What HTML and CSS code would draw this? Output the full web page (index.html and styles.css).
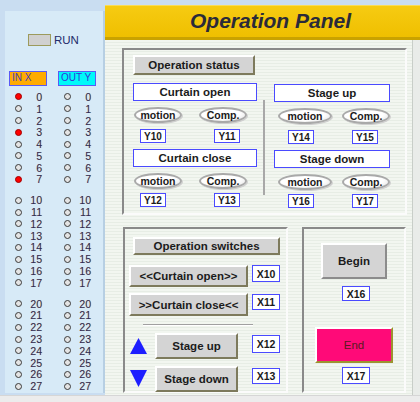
FILE: index.html
```html
<!DOCTYPE html>
<html lang="en">
<head>
    <meta charset="UTF-8">
    <title>Operation Panel</title>
    <link rel="stylesheet" href="styles.css">
</head>
<body>
    <div class="screen">
        <!-- Panel de entradas / salidas -->
        <aside class="io-panel">
            <div class="run"><span class="run-lamp"></span>RUN</div>
            <div class="io-cols">
                <div class="io-col">
                    <div class="io-tag in">IN X</div>
                    <ul class="io-group first">
                        <li><span class="led on"></span><span class="num">0</span></li>
                        <li><span class="led"></span><span class="num">1</span></li>
                        <li><span class="led"></span><span class="num">2</span></li>
                        <li><span class="led on"></span><span class="num">3</span></li>
                        <li><span class="led"></span><span class="num">4</span></li>
                        <li><span class="led"></span><span class="num">5</span></li>
                        <li><span class="led"></span><span class="num">6</span></li>
                        <li><span class="led on"></span><span class="num">7</span></li>
                    </ul>
                    <ul class="io-group">
                        <li><span class="led"></span><span class="num">10</span></li>
                        <li><span class="led"></span><span class="num">11</span></li>
                        <li><span class="led"></span><span class="num">12</span></li>
                        <li><span class="led"></span><span class="num">13</span></li>
                        <li><span class="led"></span><span class="num">14</span></li>
                        <li><span class="led"></span><span class="num">15</span></li>
                        <li><span class="led"></span><span class="num">16</span></li>
                        <li><span class="led"></span><span class="num">17</span></li>
                    </ul>
                    <ul class="io-group">
                        <li><span class="led"></span><span class="num">20</span></li>
                        <li><span class="led"></span><span class="num">21</span></li>
                        <li><span class="led"></span><span class="num">22</span></li>
                        <li><span class="led"></span><span class="num">23</span></li>
                        <li><span class="led"></span><span class="num">24</span></li>
                        <li><span class="led"></span><span class="num">25</span></li>
                        <li><span class="led"></span><span class="num">26</span></li>
                        <li><span class="led"></span><span class="num">27</span></li>
                    </ul>
                </div>
                <div class="io-col">
                    <div class="io-tag out">OUT Y</div>
                    <ul class="io-group first">
                        <li><span class="led"></span><span class="num">0</span></li>
                        <li><span class="led"></span><span class="num">1</span></li>
                        <li><span class="led"></span><span class="num">2</span></li>
                        <li><span class="led"></span><span class="num">3</span></li>
                        <li><span class="led"></span><span class="num">4</span></li>
                        <li><span class="led"></span><span class="num">5</span></li>
                        <li><span class="led"></span><span class="num">6</span></li>
                        <li><span class="led"></span><span class="num">7</span></li>
                    </ul>
                    <ul class="io-group">
                        <li><span class="led"></span><span class="num">10</span></li>
                        <li><span class="led"></span><span class="num">11</span></li>
                        <li><span class="led"></span><span class="num">12</span></li>
                        <li><span class="led"></span><span class="num">13</span></li>
                        <li><span class="led"></span><span class="num">14</span></li>
                        <li><span class="led"></span><span class="num">15</span></li>
                        <li><span class="led"></span><span class="num">16</span></li>
                        <li><span class="led"></span><span class="num">17</span></li>
                    </ul>
                    <ul class="io-group">
                        <li><span class="led"></span><span class="num">20</span></li>
                        <li><span class="led"></span><span class="num">21</span></li>
                        <li><span class="led"></span><span class="num">22</span></li>
                        <li><span class="led"></span><span class="num">23</span></li>
                        <li><span class="led"></span><span class="num">24</span></li>
                        <li><span class="led"></span><span class="num">25</span></li>
                        <li><span class="led"></span><span class="num">26</span></li>
                        <li><span class="led"></span><span class="num">27</span></li>
                    </ul>
                </div>
            </div>
        </aside>

        <!-- Panel de operación -->
        <main class="panel">
            <header class="panel-head"><h1>Operation Panel</h1></header>
            <div class="panel-body">
                <section class="frame status">
                    <div class="raised status-title">Operation status</div>
                    <div class="status-grid">
                        <div class="device-group left">
                            <div class="device-title">Curtain open</div>
                            <div class="lamps"><span class="lamp">motion</span><span class="lamp">Comp.</span></div>
                            <div class="tags"><span class="tag">Y10</span><span class="tag">Y11</span></div>
                            <div class="device-title">Curtain close</div>
                            <div class="lamps"><span class="lamp">motion</span><span class="lamp">Comp.</span></div>
                            <div class="tags last"><span class="tag">Y12</span><span class="tag">Y13</span></div>
                        </div>
                        <div class="vsep"></div>
                        <div class="device-group right">
                            <div class="device-title">Stage up</div>
                            <div class="lamps"><span class="lamp wide">motion</span><span class="lamp">Comp.</span></div>
                            <div class="tags"><span class="tag">Y14</span><span class="tag">Y15</span></div>
                            <div class="device-title">Stage down</div>
                            <div class="lamps"><span class="lamp wide">motion</span><span class="lamp">Comp.</span></div>
                            <div class="tags last"><span class="tag">Y16</span><span class="tag">Y17</span></div>
                        </div>
                    </div>
                </section>

                <div class="bottom-row">
                    <section class="frame switches">
                        <div class="raised switches-title">Operation switches</div>
                        <div class="sw-row first">
                            <button class="raised sw-btn">&lt;&lt;Curtain open&gt;&gt;</button>
                            <span class="tag x-tag">X10</span>
                        </div>
                        <div class="sw-row">
                            <button class="raised sw-btn tall">&gt;&gt;Curtain close&lt;&lt;</button>
                            <span class="tag x-tag">X11</span>
                        </div>
                        <div class="hsep"></div>
                        <div class="sw-row stage">
                            <svg class="arrow" width="17" height="16" viewBox="0 0 17 16"><polygon points="8.5,0 17,16 0,16" fill="#1e1eff"/></svg>
                            <button class="raised stage-btn">Stage up</button>
                            <span class="tag x-tag">X12</span>
                        </div>
                        <div class="sw-row stage">
                            <svg class="arrow down" width="17" height="17" viewBox="0 0 17 17"><polygon points="0,0 17,0 8.5,17" fill="#1e1eff"/></svg>
                            <button class="raised stage-btn">Stage down</button>
                            <span class="tag x-tag short">X13</span>
                        </div>
                    </section>

                    <section class="frame start">
                        <button class="raised big-btn begin">Begin</button>
                        <span class="tag x-tag x16">X16</span>
                        <button class="raised big-btn end">End</button>
                        <span class="tag x-tag x17">X17</span>
                    </section>
                </div>
            </div>
        </main>
    </div>
    <div class="taskbar"></div>
</body>
</html>
```

FILE: styles.css
```css
:root {
    --gray-btn: #d4d4d4;
    --blue-line: #4a4aff;
    --frame-dark: #8a8a8a;
    --text-dark: #1b1b1b;
}

* {
    margin: 0;
    padding: 0;
    box-sizing: border-box;
}

html, body {
    width: 420px;
    height: 402px;
    overflow: hidden;
}

body {
    background-color: #c9ddf1;
    font-family: 'Liberation Sans', Arial, sans-serif;
    color: var(--text-dark);
}

.screen {
    display: grid;
    grid-template-columns: 100px 315px;
    padding-left: 5px;
    height: 395px;
}

/* Panel izquierdo de E/S */
.io-panel {
    margin-top: 11px;
    height: 382px;
    background-color: #d7eaf7;
    border-right: 2px solid #b7cfe3;
    padding: 23px 0 0 4px;
}

.run {
    display: flex;
    align-items: center;
    gap: 3px;
    margin-left: 19px;
    height: 12px;
    font-size: 11.5px;
    color: #242c6a;
}

.run-lamp {
    width: 23px;
    height: 12px;
    background-color: #d0d0d0;
    border: 1.5px solid #9c9a5c;
}

.io-cols {
    display: flex;
    gap: 11px;
    margin-top: 25px;
}

.io-col {
    width: 38px;
}

.io-tag {
    height: 15px;
    border: 1.5px solid #5a5af5;
    font-size: 10px;
    line-height: 12px;
    padding-left: 2px;
}

.io-tag.in {
    background-color: #ffab00;
    color: #4b3fb2;
}

.io-tag.out {
    background-color: #00f8f8;
    color: #3434d8;
}

.io-group {
    list-style: none;
    margin-top: 9px;
}

.io-group.first {
    margin-top: 5px;
}

.io-group li {
    display: flex;
    align-items: center;
    height: 11.8px;
    font-size: 10.5px;
    color: #2c2c5c;
    padding-right: 5px;
}

.led {
    width: 7px;
    height: 7px;
    border-radius: 50%;
    border: 1.5px solid #3a3a3a;
    background-color: #e4e4e4;
    margin-left: 6px;
}

.led.on {
    background-color: #ff0000;
    border-color: #a00000;
}

.num {
    margin-left: auto;
    text-shadow: 0.5px 0 0 rgba(225, 150, 20, 0.55);
}

/* Panel de operación */
.panel {
    margin-top: 5px;
    display: flex;
    flex-direction: column;
}

.panel-head {
    height: 35px;
    background: linear-gradient(#f6cb12, #efbf00);
    border-top: 1px solid #f9dc58;
    border-bottom: 3px solid #c9a200;
    text-align: center;
    padding: 4px 0 0 16px;
}

.panel-head h1 {
    font-size: 21px;
    line-height: 21px;
    font-style: italic;
    font-weight: bold;
    color: #2a2a3a;
}

.panel-body {
    flex: 1;
    background: repeating-linear-gradient(180deg, #f2f6f0 0 2px, #e7ede5 2px 3px);
    box-shadow: inset -7px 0 0 #e9ece9, inset -8px 0 0 #c8cec8;
    padding: 8px 0 0 17px;
}

.frame {
    border: 2px solid;
    border-color: var(--frame-dark) #fbfbfb #fbfbfb var(--frame-dark);
}

.raised {
    display: flex;
    align-items: center;
    justify-content: center;
    background-color: var(--gray-btn);
    border: 2px solid;
    border-color: #ffffff #7d7a5c #7d7a5c #ffffff;
    font-family: inherit;
    font-weight: bold;
    font-size: 11.5px;
    color: var(--text-dark);
}

.status {
    width: 285px;
    height: 167px;
    padding: 5px 0 0 9px;
}

.status-title {
    width: 122px;
    height: 20px;
}

.status-grid {
    display: grid;
    grid-template-columns: 124px 17px 116px;
    margin-top: 8px;
}

.vsep {
    width: 2px;
    height: 95px;
    margin: 17px 0 0 6px;
    background-color: #a8a8a8;
}

.device-group.right {
    margin-top: 1px;
}

.device-title {
    height: 18px;
    background-color: #ffffff;
    border: 1.5px solid var(--blue-line);
    display: flex;
    align-items: center;
    justify-content: center;
    font-weight: bold;
    font-size: 11.5px;
}

.lamps {
    display: flex;
    justify-content: space-between;
    margin: 6px 0;
}

.left .lamps {
    padding: 0 10px 0 1px;
}

.right .lamps {
    padding-left: 4px;
}

.lamp {
    width: 48px;
    height: 16px;
    border-radius: 50%;
    border: 2px solid #a9a9a9;
    background: radial-gradient(ellipse at 45% 40%, #ffffff 55%, #d8d8d8 100%);
    box-shadow: 1px 1px 0 #cfcfcf;
    display: flex;
    align-items: center;
    justify-content: center;
    font-weight: bold;
    font-size: 10.5px;
}

.lamp.wide {
    width: 54px;
}

.tags {
    display: flex;
    justify-content: space-between;
    margin-bottom: 6px;
}

.tags.last {
    margin-top: -2px;
}

.left .tags {
    padding: 0 17px 0 7px;
}

.right .tags {
    padding: 0 12px 0 14px;
}

.tag {
    width: 26px;
    height: 14px;
    background-color: #ffffff;
    border: 1.5px solid var(--blue-line);
    display: flex;
    align-items: center;
    justify-content: center;
    font-weight: bold;
    font-size: 10px;
}

/* Fila inferior */
.bottom-row {
    display: flex;
    gap: 14px;
    margin-top: 12px;
    padding-left: 1px;
    height: 166px;
}

.switches {
    width: 165px;
}

.switches-title {
    width: 147px;
    height: 18px;
    margin: 8px 0 0 8px;
}

.sw-row {
    display: flex;
    align-items: flex-start;
    margin-top: 6px;
}

.sw-row.first {
    margin-top: 10px;
}

.sw-btn {
    width: 119px;
    height: 22px;
    margin-left: 4px;
}

.sw-btn.tall {
    height: 23px;
}

.x-tag {
    width: 28px;
    height: 17px;
    margin-left: 4px;
    font-size: 10.5px;
}

.sw-row .tall + .x-tag {
    margin-top: 1px;
    height: 16px;
}

.hsep {
    width: 110px;
    height: 2px;
    margin: 8px 0 0 18px;
    border-top: 1px solid #a0a0a0;
    border-bottom: 1px solid #ffffff;
}

.sw-row.stage {
    margin-top: 7px;
}

.arrow {
    margin: 5px 0 0 5px;
}

.arrow.down {
    margin-top: 4px;
}

.stage-btn {
    width: 83px;
    height: 26px;
    margin-left: 8px;
}

.stage .x-tag {
    margin: 2px 0 0 14px;
    height: 18px;
}

.stage .x-tag.short {
    height: 16px;
}

.start {
    width: 104px;
    display: flex;
    flex-direction: column;
    align-items: center;
}

.big-btn {
    height: 36px;
}

.begin {
    width: 66px;
    margin-top: 14px;
    border-color: #ffffff #8c8c8c #8c8c8c #ffffff;
}

.x16 {
    margin-top: 7px;
    height: 15px;
}

.end {
    width: 78px;
    margin-top: 26px;
    background-color: #ff0a78;
    border-color: #ffffff #9c9330 #9c9330 #ffffff;
    color: #5a1a22;
    font-weight: normal;
}

.x17 {
    margin-top: 4px;
}

.taskbar {
    height: 7px;
    background-color: #ececec;
    border-top: 1px solid #d6d6d6;
}
```
